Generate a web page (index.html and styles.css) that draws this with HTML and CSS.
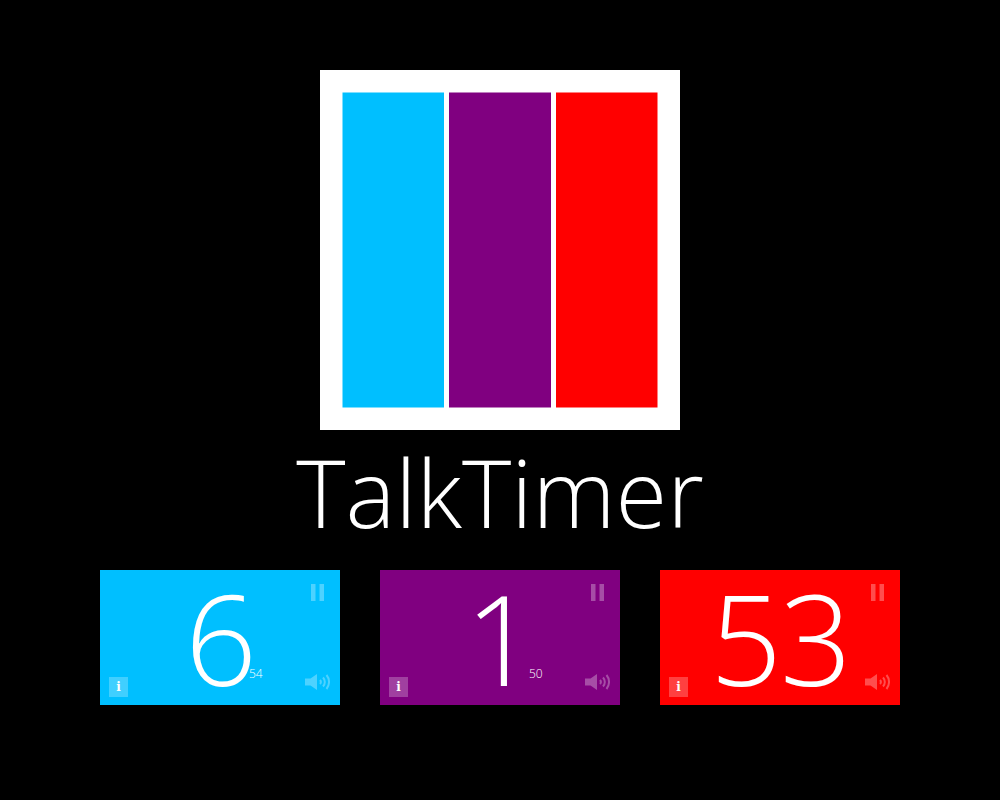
FILE: index.html
```html
<!DOCTYPE html>
<html lang="en">
<head>
    <meta charset="UTF-8">
    <title>TalkTimer</title>
    <link rel="stylesheet" href="styles.css">
</head>
<body>

    <svg class="logo" viewBox="0 0 360 360">
        <rect width="360" height="360" fill="#fff"/>
        <rect x="22.5" y="22.5" width="101.5" height="315" fill="#00bfff"/>
        <rect x="129" y="22.5" width="102" height="315" fill="#800080"/>
        <rect x="236" y="22.5" width="101.5" height="315" fill="#f00"/>
    </svg>

    <h1 class="title">TalkTimer</h1>

    <div class="tiles">
        <div class="tile blue">
            <div class="time"><span class="big">6</span><span class="small">54</span></div>
            <svg class="pause" viewBox="0 0 13 17"><path d="M0 0h4.5v17H0zM8.5 0H13v17H8.500z"/></svg>
            <span class="info">i</span>
            <svg class="sound" viewBox="0 0 25 16"><path d="M0 4.500h5.500L12 0v16l-6.500-4.500H0z"/><path class="wave" d="M15 6a3 3 0 0 1 0 4M18 3.500a6.500 6.500 0 0 1 0 9M21.500 1a11 11 0 0 1 0 14"/></svg>
        </div>
        <div class="tile purple">
            <div class="time"><span class="big">1</span><span class="small">50</span></div>
            <svg class="pause" viewBox="0 0 13 17"><path d="M0 0h4.500v17H0zM8.500 0H13v17H8.500z"/></svg>
            <span class="info">i</span>
            <svg class="sound" viewBox="0 0 25 16"><path d="M0 4.500h5.500L12 0v16l-6.500-4.500H0z"/><path class="wave" d="M15 6a3 3 0 0 1 0 4M18 3.500a6.500 6.500 0 0 1 0 9M21.500 1a11 11 0 0 1 0 14"/></svg>
        </div>
        <div class="tile red">
            <div class="time"><span class="big">53</span></div>
            <svg class="pause" viewBox="0 0 13 17"><path d="M0 0h4.500v17H0zM8.500 0H13v17H8.500z"/></svg>
            <span class="info">i</span>
            <svg class="sound" viewBox="0 0 25 16"><path d="M0 4.500h5.500L12 0v16l-6.500-4.500H0z"/><path class="wave" d="M15 6a3 3 0 0 1 0 4M18 3.500a6.500 6.500 0 0 1 0 9M21.500 1a11 11 0 0 1 0 14"/></svg>
        </div>
    </div>

</body>
</html>
```

FILE: styles.css
```css
body {
    margin: 0;
    height: 800px;
    overflow: hidden;
    padding-top: 70px;
    box-sizing: border-box;
    background-color: #000;
    color: #fff;
    font-family: "Open Sans", "Noto Sans", sans-serif;
    font-weight: 350;
    display: flex;
    flex-direction: column;
    align-items: center;
}
.blue {
    background-color: #00bfff;
}
.purple {
    background-color: #800080;
}
.red {
    background-color: #f00;
}
.logo {
    display: block;
    width: 360px;
    height: 360px;
}
.title {
    margin: 0;
    height: 140px;
    font-size: 94px;
    font-weight: 350;
    line-height: 124px;
}
.tiles {
    display: flex;
    gap: 40px;
}
.tile {
    position: relative;
    width: 240px;
    height: 135px;
    overflow: hidden;
}
.time {
    display: flex;
    justify-content: center;
    height: 135px;
}
.big {
    font-size: 126px;
    letter-spacing: -2px;
    line-height: 135px;
}
.small {
    position: absolute;
    left: 149px;
    top: 96px;
    font-size: 12px;
    line-height: 16px;
    font-weight: 300;
}
.pause {
    position: absolute;
    top: 14px;
    right: 16px;
    width: 13px;
    height: 17px;
    fill: rgba(255, 255, 255, 0.3);
}
.sound {
    position: absolute;
    right: 10px;
    bottom: 15px;
    width: 25px;
    height: 16px;
    fill: rgba(255, 255, 255, 0.3);
}
.wave {
    fill: none;
    stroke: rgba(255, 255, 255, 0.3);
    stroke-width: 2;
}
.info {
    position: absolute;
    left: 9px;
    bottom: 8px;
    width: 19px;
    height: 20px;
    background-color: rgba(255, 255, 255, 0.25);
    font-family: "DejaVu Serif", serif;
    font-size: 12px;
    font-weight: 700;
    line-height: 21px;
    text-align: center;
}
```
